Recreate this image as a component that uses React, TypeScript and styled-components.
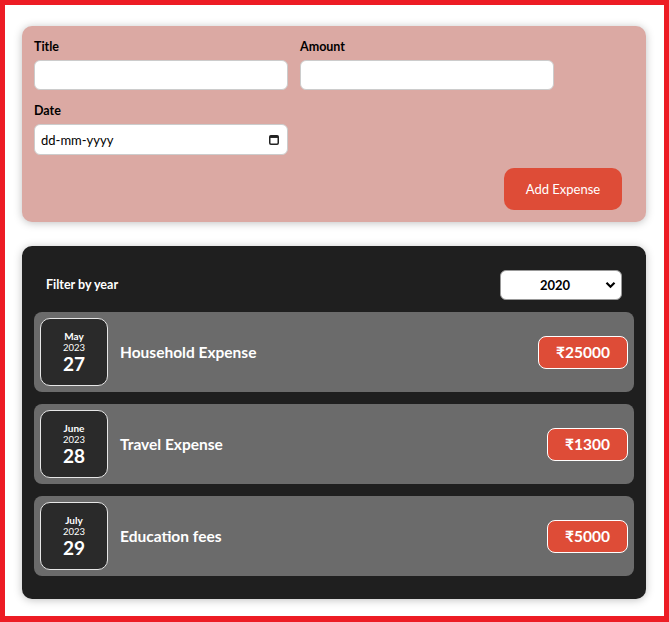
import React from "react";
import styled, { createGlobalStyle } from "styled-components";

const Global = createGlobalStyle`
  html, body { margin: 0; padding: 0; background: #fff; }
  body { font-family: Lato, "Open Sans", Arial, sans-serif; }
  * { box-sizing: border-box; }
`;

const Frame = styled.div`
  min-height: 622px;
  border: 5px solid #ed1c24;
  border-bottom-width: 6px;
  padding: 21px 0 17px 17px;
  display: flex;
  flex-direction: column;
  align-items: flex-start;
  gap: 24px;
`;

const FormCard = styled.form`
  width: 624px;
  background: #dba9a3;
  border-radius: 10px;
  padding: 12px;
  box-shadow: 0 1px 8px rgba(0, 0, 0, 0.25);
  display: flex;
  flex-direction: column;
`;

const Controls = styled.div`
  display: flex;
  flex-wrap: wrap;
  gap: 12px;
`;

const Control = styled.div`
  width: 254px;
  display: flex;
  flex-direction: column;
`;

const Label = styled.label`
  font-weight: 700;
  font-size: 12.5px;
  line-height: 16px;
  margin: 1px 0 5px;
  color: #000;
`;

const Input = styled.input`
  height: 30px;
  width: 100%;
  border: 1px solid #ccc;
  border-radius: 6px;
  background: #fff;
  font: inherit;
  font-size: 13px;
  padding: 0 6px;
  outline: none;
  &::placeholder { color: #000; }
`;

const DateWrap = styled.div`
  position: relative;
  height: 31px;
  ${Input} { height: 31px; }
`;

const CalIcon = styled.svg`
  position: absolute;
  right: 9px;
  top: 10px;
  width: 10px;
  height: 11px;
`;

const Actions = styled.div`
  display: flex;
  justify-content: flex-end;
  margin-top: 13px;
  padding-right: 12px;
`;

const AddButton = styled.button`
  width: 118px;
  height: 42px;
  border: none;
  border-radius: 10px;
  background: #de4c37;
  color: #fff;
  font: inherit;
  font-size: 13px;
  cursor: pointer;
`;

const ListCard = styled.div`
  width: 624px;
  background: #1f1f1f;
  border-radius: 10px;
  padding: 24px 12px 23px;
  box-shadow: 0 1px 8px rgba(0, 0, 0, 0.25);
  display: flex;
  flex-direction: column;
  gap: 12px;
`;

const FilterRow = styled.div`
  display: flex;
  justify-content: space-between;
  align-items: center;
  padding: 0 12px;
  height: 30px;
`;

const FilterLabel = styled.span`
  color: #fff;
  font-weight: 700;
  font-size: 12.5px;
  margin-top: -2px;
`;

const SelectWrap = styled.div`
  position: relative;
  width: 122px;
  height: 30px;
`;

const Select = styled.select`
  appearance: none;
  width: 100%;
  height: 100%;
  border: 1px solid #999;
  border-radius: 6px;
  background: #fff;
  font: inherit;
  font-size: 13px;
  font-weight: 700;
  color: #000;
  padding: 0 0 0 39px;
`;

const Chevron = styled.svg`
  position: absolute;
  right: 6px;
  top: 11px;
  width: 11px;
  height: 8px;
  pointer-events: none;
`;

const Item = styled.div`
  height: 80px;
  background: #6b6b6b;
  border-radius: 8px;
  padding: 6px;
  display: flex;
  align-items: center;
  gap: 12px;
`;

const DateBox = styled.div`
  width: 68px;
  height: 68px;
  flex: none;
  border: 1px solid #e6e6e6;
  border-radius: 10px;
  background: #2a2a2a;
  color: #fff;
  display: flex;
  flex-direction: column;
  align-items: center;
  justify-content: center;
`;

const Month = styled.div`
  font-size: 10px;
  font-weight: 700;
  line-height: 12px;
`;

const Year = styled.div`
  font-size: 9.5px;
  line-height: 11px;
`;

const Day = styled.div`
  font-size: 19px;
  font-weight: 700;
  line-height: 22px;
`;

const ItemTitle = styled.h2`
  flex: 1;
  margin: 0;
  color: #fff;
  font-size: 15.5px;
  font-weight: 700;
`;

const Price = styled.div`
  height: 33px;
  padding: 0 17px;
  border: 1px solid #fff;
  border-radius: 8px;
  background: #de4c37;
  color: #fff;
  font-size: 15.5px;
  font-weight: 700;
  display: flex;
  align-items: center;
`;

const expenses = [
  { month: "May", year: "2023", day: "27", title: "Household Expense", amount: "25000" },
  { month: "June", year: "2023", day: "28", title: "Travel Expense", amount: "1300" },
  { month: "July", year: "2023", day: "29", title: "Education fees", amount: "5000" },
];

export default function App() {
  return (
    <>
      <Global />
      <Frame>
        <FormCard onSubmit={(e) => e.preventDefault()}>
          <Controls>
            <Control>
              <Label>Title</Label>
              <Input type="text" />
            </Control>
            <Control>
              <Label>Amount</Label>
              <Input type="number" />
            </Control>
            <Control>
              <Label>Date</Label>
              <DateWrap>
                <Input type="text" placeholder="dd-mm-yyyy" />
                <CalIcon viewBox="0 0 10 11">
                  <rect x="0.75" y="1.75" width="8.5" height="8.5" rx="1.2" fill="none" stroke="#222" strokeWidth="1.5" />
                  <rect x="0.75" y="1.75" width="8.5" height="2.2" fill="#222" />
                </CalIcon>
              </DateWrap>
            </Control>
          </Controls>
          <Actions>
            <AddButton type="submit">Add Expense</AddButton>
          </Actions>
        </FormCard>
        <ListCard>
          <FilterRow>
            <FilterLabel>Filter by year</FilterLabel>
            <SelectWrap>
              <Select defaultValue="2020">
                <option value="2023">2023</option>
                <option value="2022">2022</option>
                <option value="2021">2021</option>
                <option value="2020">2020</option>
              </Select>
              <Chevron viewBox="0 0 11 8">
                <path d="M1.5 1.8 L5.5 5.8 L9.5 1.8" fill="none" stroke="#000" strokeWidth="2.2" />
              </Chevron>
            </SelectWrap>
          </FilterRow>
          {expenses.map((e) => (
            <Item key={e.title}>
              <DateBox>
                <Month>{e.month}</Month>
                <Year>{e.year}</Year>
                <Day>{e.day}</Day>
              </DateBox>
              <ItemTitle>{e.title}</ItemTitle>
              <Price>₹{e.amount}</Price>
            </Item>
          ))}
        </ListCard>
      </Frame>
    </>
  );
}
